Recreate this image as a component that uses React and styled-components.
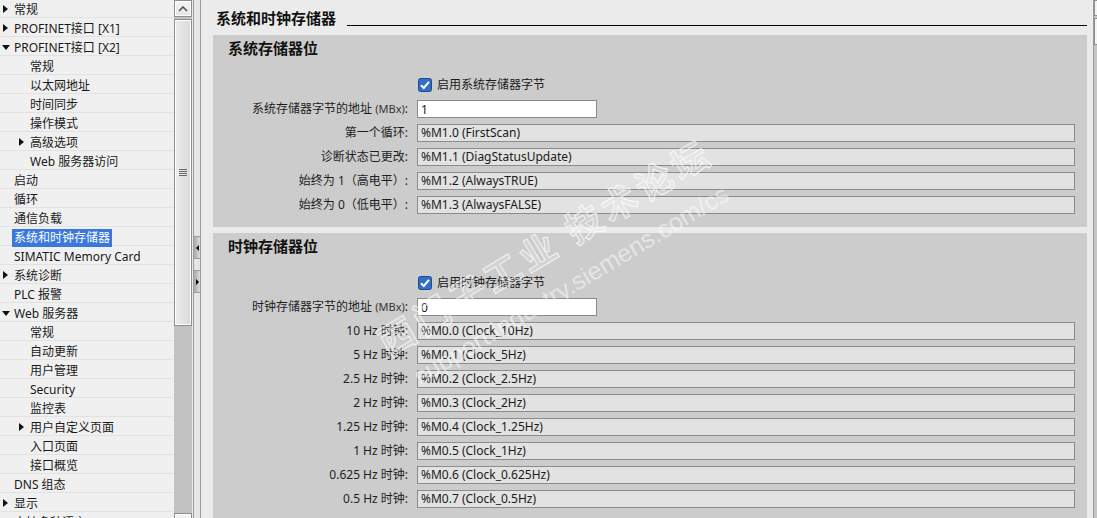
import styled, { createGlobalStyle } from "styled-components";

const GlobalStyle = createGlobalStyle`
  html, body {
    margin: 0;
    padding: 0;
    overflow: hidden;
    background: #ebebeb;
  }
  body {
    font-family: "Noto Sans", "Noto Sans CJK SC", sans-serif;
    font-size: 12px;
    color: #1a1a1a;
  }
  * {
    box-sizing: border-box;
  }
`;

const Window = styled.div`
  display: flex;
  width: 1097px;
  height: 530px;
  overflow: hidden;
`;

/* ---------- left tree ---------- */

const Sidebar = styled.nav`
  flex: 0 0 174px;
  background: #f0f0f0;
  overflow: hidden;
`;

const TreeList = styled.ul`
  list-style: none;
  margin: -1px 0 0;
  padding: 0;
`;

const TreeRow = styled.li`
  display: flex;
  align-items: center;
  height: 19px;
  border-bottom: 1px solid #e2e2e2;
  padding-left: ${(p) => (p.$depth === 2 ? 16 : 0)}px;
  white-space: nowrap;
`;

const Twisty = styled.span`
  flex: 0 0 14px;
  display: flex;
  align-items: center;
  padding-left: ${(p) => (p.$open ? 2 : 3)}px;
  position: relative;
  top: 1px;

  &::before {
    content: "";
    display: ${(p) => (p.$state ? "block" : "none")};
    width: 0;
    height: 0;
    border-style: solid;
    border-color: transparent;
    ${(p) =>
      p.$open
        ? "border-width: 5px 4px 0 4px; border-top-color: #111;"
        : "border-width: 4px 0 4px 5px; border-left-color: #111;"}
  }
`;

const TreeLabel = styled.span`
  position: relative;
  top: 2px;
  line-height: 18px;
  padding: 0 2px;
  margin-left: -2px;
  background: ${(p) => (p.$selected ? "#3a78db" : "transparent")};
  color: ${(p) => (p.$selected ? "#fff" : "#1a1a1a")};
`;

/* ---------- scroll bars ---------- */

const VScroll = styled.div`
  flex: 0 0 18px;
  display: flex;
  flex-direction: column;
  background: #c2c2c2;
`;

const ScrollButton = styled.div`
  flex: 0 0 17px;
  display: flex;
  align-items: center;
  justify-content: center;
  border: 1px solid #8e8e8e;
  box-shadow: inset 0 0 0 1px #fff;
  background: linear-gradient(#f5f5f5, #e4e4e4);
`;

const Thumb = styled.div`
  flex: 0 0 307px;
  margin-top: 2px;
  display: flex;
  align-items: center;
  justify-content: center;
  border: 1px solid #8e8e8e;
  box-shadow: inset 0 0 0 1px #fff;
  background: linear-gradient(to right, #ededed, #d8d8d8);
`;

const Grip = styled.div`
  width: 8px;
  height: 7px;
  background: repeating-linear-gradient(
    #6a6a6a 0 1px,
    transparent 1px 2px
  );
`;

const Track = styled.div`
  flex: 1;
`;

const Splitter = styled.div`
  flex: 0 0 8px;
  margin-left: 1px;
  display: flex;
  flex-direction: column;
  padding-top: 236px;
  background: #e6e6e6;
  border-left: 1px solid #9c9c9c;
  border-right: 1px solid #9c9c9c;
`;

const SplitButton = styled.div`
  height: 23px;
  margin-bottom: 11px;
  display: flex;
  align-items: center;
  justify-content: center;
  border-top: 1px solid #9c9c9c;
  border-bottom: 1px solid #9c9c9c;
  background: linear-gradient(to right, #a8a8a8, #dcdcdc);

  &::before {
    content: "";
    width: 0;
    height: 0;
    border-style: solid;
    border-color: transparent;
    ${(p) =>
      p.$dir === "left"
        ? "border-width: 3px 3px 3px 0; border-right-color: #000;"
        : "border-width: 3px 0 3px 3px; border-left-color: #000;"}
  }
`;

const RightScroll = styled.div`
  flex: 0 0 4px;
  display: flex;
  flex-direction: column;
  overflow: hidden;
  background: #c6c6c6;
  border-left: 1px solid #9a9a9a;
`;

const RightPiece = styled.div`
  flex: 0 0 ${(p) => p.$h}px;
  width: 17px;
  margin-bottom: 2px;
  border: 1px solid #8e8e8e;
  background: #f4f4f4;
`;

/* ---------- main form ---------- */

const Main = styled.main`
  position: relative;
  flex: 1;
  padding: 0 6px 0 12px;
  background: #ebebeb;
  overflow: hidden;
`;

const HeadingRow = styled.div`
  display: flex;
  align-items: flex-start;
  height: 35px;
  padding: 10px 0 0 3px;
`;

const Heading = styled.h1`
  margin: 0 11px 0 0;
  font-family: "Noto Sans CJK SC", sans-serif;
  font-size: 15px;
  font-weight: 700;
  line-height: 16px;
  color: #111;
`;

const Rule = styled.div`
  flex: 1;
  height: 1px;
  margin-top: 15px;
  background: #000;
`;

const Panel = styled.section`
  background: #cccccc;
  padding: 5px 12px 10px 0;
  margin-bottom: 6px;
`;

const PanelTitle = styled.h2`
  margin: 0 0 17px 15px;
  font-family: "Noto Sans CJK SC", sans-serif;
  font-size: 15px;
  font-weight: 700;
  line-height: 16px;
  color: #111;
`;

const FormGrid = styled.div`
  display: grid;
  grid-template-columns: 195px 1fr;
  grid-auto-rows: 24px;
  column-gap: 9px;
  align-items: center;
`;

const FieldLabel = styled.div`
  text-align: right;
  white-space: nowrap;
  line-height: 16px;
  color: #1e1e1e;
`;

const Unit = styled.span`
  font-size: 11px;
  color: #333;
`;

const CheckLine = styled.label`
  display: flex;
  align-items: center;
  gap: 5px;
  margin-left: 1px;
  line-height: 16px;
`;

const AddressInput = styled.input`
  width: 180px;
  height: 18px;
  padding: 0 3px;
  border: 1px solid #8a8a8a;
  background: #fff;
  font: 12px "Noto Sans", "Noto Sans CJK SC", sans-serif;
  color: #1a1a1a;
  outline: none;
`;

const ReadField = styled.div`
  height: 18px;
  padding: 0 3px;
  border: 1px solid #8c8c8c;
  background: #e2e2e2;
  line-height: 16px;
  white-space: nowrap;
  color: #1a1a1a;
`;

const Watermark = styled.div`
  position: absolute;
  left: ${(p) => p.$x}px;
  top: ${(p) => p.$y}px;
  transform: translate(-50%, -50%) rotate(-31deg);
  white-space: nowrap;
  pointer-events: none;
  font-family: ${(p) =>
    p.$big ? '"Noto Sans CJK SC", sans-serif' : '"Liberation Sans", sans-serif'};
  font-size: ${(p) => (p.$big ? 36 : 25)}px;
  font-weight: ${(p) => (p.$big ? 700 : 400)};
  letter-spacing: ${(p) => (p.$big ? 5 : 0)}px;
  color: ${(p) => (p.$big ? "rgba(255,255,255,0.18)" : "rgba(255,255,255,0.5)")};
  -webkit-text-stroke: ${(p) => (p.$big ? "1px rgba(255,255,255,0.75)" : "0")};
`;

function CheckIcon() {
  return (
    <svg width="14" height="14" viewBox="0 0 14 14">
      <rect x="0.5" y="0.5" width="13" height="13" rx="2" fill="#2f6fcb" stroke="#1f4a86" />
      <path d="M3 7.2 L5.8 10 L11 3.8" fill="none" stroke="#fff" strokeWidth="2" />
    </svg>
  );
}

function Chevron() {
  return (
    <svg width="10" height="6" viewBox="0 0 10 6">
      <path d="M1 5 L5 1 L9 5" fill="none" stroke="#555" strokeWidth="1.6" />
    </svg>
  );
}

const tree = [
  { t: "常规", d: 0, s: "closed" },
  { t: "PROFINET接口 [X1]", d: 0, s: "closed" },
  { t: "PROFINET接口 [X2]", d: 0, s: "open" },
  { t: "常规", d: 2 },
  { t: "以太网地址", d: 2 },
  { t: "时间同步", d: 2 },
  { t: "操作模式", d: 2 },
  { t: "高级选项", d: 2, s: "closed" },
  { t: "Web 服务器访问", d: 2 },
  { t: "启动", d: 0 },
  { t: "循环", d: 0 },
  { t: "通信负载", d: 0 },
  { t: "系统和时钟存储器", d: 0, selected: true },
  { t: "SIMATIC Memory Card", d: 0 },
  { t: "系统诊断", d: 0, s: "closed" },
  { t: "PLC 报警", d: 0 },
  { t: "Web 服务器", d: 0, s: "open" },
  { t: "常规", d: 2 },
  { t: "自动更新", d: 2 },
  { t: "用户管理", d: 2 },
  { t: "Security", d: 2 },
  { t: "监控表", d: 2 },
  { t: "用户自定义页面", d: 2, s: "closed" },
  { t: "入口页面", d: 2 },
  { t: "接口概览", d: 2 },
  { t: "DNS 组态", d: 0 },
  { t: "显示", d: 0, s: "closed" },
  { t: "支持多种语言", d: 0 },
];

const systemBits = [
  ["第一个循环:", "%M1.0 (FirstScan)"],
  ["诊断状态已更改:", "%M1.1 (DiagStatusUpdate)"],
  ["始终为 1（高电平）:", "%M1.2 (AlwaysTRUE)"],
  ["始终为 0（低电平）:", "%M1.3 (AlwaysFALSE)"],
];

const clockBits = [
  ["10 Hz 时钟:", "%M0.0 (Clock_10Hz)"],
  ["5 Hz 时钟:", "%M0.1 (Clock_5Hz)"],
  ["2.5 Hz 时钟:", "%M0.2 (Clock_2.5Hz)"],
  ["2 Hz 时钟:", "%M0.3 (Clock_2Hz)"],
  ["1.25 Hz 时钟:", "%M0.4 (Clock_1.25Hz)"],
  ["1 Hz 时钟:", "%M0.5 (Clock_1Hz)"],
  ["0.625 Hz 时钟:", "%M0.6 (Clock_0.625Hz)"],
  ["0.5 Hz 时钟:", "%M0.7 (Clock_0.5Hz)"],
];

function MemorySection({ title, enableText, addressLabel, address, bits }) {
  return (
    <Panel>
      <PanelTitle>{title}</PanelTitle>
      <FormGrid>
        <div />
        <CheckLine>
          <CheckIcon />
          {enableText}
        </CheckLine>

        <FieldLabel>
          {addressLabel} <Unit>(MBx)</Unit>:
        </FieldLabel>
        <div>
          <AddressInput readOnly value={address} />
        </div>

        {bits.map(([label, value]) => (
          <FormRowPair key={value} label={label} value={value} />
        ))}
      </FormGrid>
    </Panel>
  );
}

function FormRowPair({ label, value }) {
  return (
    <>
      <FieldLabel>{label}</FieldLabel>
      <ReadField>{value}</ReadField>
    </>
  );
}

export default function App() {
  return (
    <>
      <GlobalStyle />
      <Window>
        <Sidebar>
          <TreeList>
            {tree.map((item, i) => (
              <TreeRow key={i} $depth={item.d}>
                <Twisty $state={item.s} $open={item.s === "open"} />
                <TreeLabel $selected={item.selected}>{item.t}</TreeLabel>
              </TreeRow>
            ))}
          </TreeList>
        </Sidebar>

        <VScroll>
          <ScrollButton>
            <Chevron />
          </ScrollButton>
          <Thumb>
            <Grip />
          </Thumb>
          <Track />
          <ScrollButton />
        </VScroll>

        <Splitter>
          <SplitButton $dir="left" />
          <SplitButton $dir="right" />
        </Splitter>

        <Main>
          <HeadingRow>
            <Heading>系统和时钟存储器</Heading>
            <Rule />
          </HeadingRow>

          <MemorySection
            title="系统存储器位"
            enableText="启用系统存储器字节"
            addressLabel="系统存储器字节的地址"
            address="1"
            bits={systemBits}
          />

          <MemorySection
            title="时钟存储器位"
            enableText="启用时钟存储器字节"
            addressLabel="时钟存储器字节的地址"
            address="0"
            bits={clockBits}
          />

          <Watermark $big $x={343} $y={245}>
            西门子工业 技术论坛
          </Watermark>
          <Watermark $x={370} $y={285}>
            support.industry.siemens.com/cs
          </Watermark>
        </Main>

        <RightScroll>
          <RightPiece $h={16} />
          <RightPiece $h={27} />
        </RightScroll>
      </Window>
    </>
  );
}
